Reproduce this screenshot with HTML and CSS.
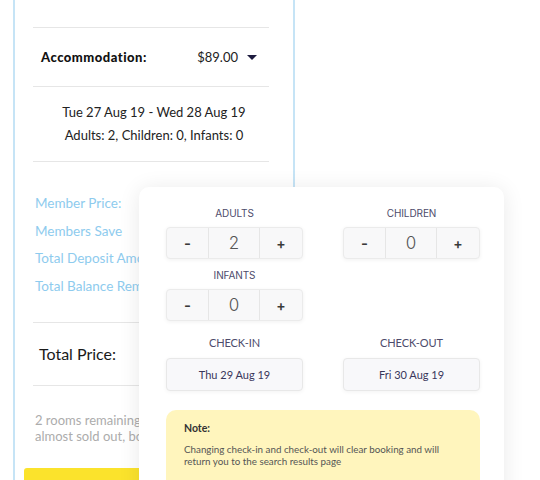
FILE: index.html
```html
<!DOCTYPE html>
<html>
<head>
<meta charset="utf-8">
<link rel="stylesheet" href="styles.css">
</head>
<body>
<div class="panel">
  <div class="divider"></div>
  <div class="accom">
    <span class="accom-label">Accommodation:</span>
    <span class="accom-price">$89.00 <span class="caret"></span></span>
  </div>
  <div class="divider"></div>
  <div class="dates">
    <div>Tue 27 Aug 19 - Wed 28 Aug 19</div>
    <div>Adults: 2, Children: 0, Infants: 0</div>
  </div>
  <div class="divider"></div>
  <div class="members">
    <div>Member Price:</div>
    <div>Members Save</div>
    <div>Total Deposit Amount:</div>
    <div>Total Balance Remaining:</div>
  </div>
  <div class="divider"></div>
  <div class="total">Total Price:</div>
  <div class="divider"></div>
  <div class="remaining">
    <span class="line">2 rooms remaining at this price, this property is</span>
    <span class="line">almost sold out, book now</span>
  </div>
  <div class="book-btn"></div>
</div>

<div class="popup">
  <div class="grid">
    <div class="field">
      <div class="label">ADULTS</div>
      <div class="stepper"><span class="btn">-</span><span class="val">2</span><span class="btn plus">+</span></div>
    </div>
    <div class="field">
      <div class="label">CHILDREN</div>
      <div class="stepper"><span class="btn">-</span><span class="val">0</span><span class="btn plus">+</span></div>
    </div>
    <div class="field">
      <div class="label">INFANTS</div>
      <div class="stepper"><span class="btn">-</span><span class="val">0</span><span class="btn plus">+</span></div>
    </div>
    <div class="field"></div>
    <div class="field date-field">
      <div class="label date-label">CHECK-IN</div>
      <div class="datebox">Thu 29 Aug 19</div>
    </div>
    <div class="field date-field">
      <div class="label date-label">CHECK-OUT</div>
      <div class="datebox">Fri 30 Aug 19</div>
    </div>
  </div>
  <div class="note">
    <div class="note-title">Note:</div>
    <div class="note-text">Changing check-in and check-out will clear booking and will return you to the search results page</div>
  </div>
</div>
</body>
</html>
```

FILE: styles.css
```css
html, body {
  margin: 0;
  padding: 0;
  background: #ffffff;
  overflow: hidden;
  height: 480px;
}
body {
  font-family: "Lato", "Open Sans", sans-serif;
  color: #222;
}
.panel {
  margin-left: 13px;
  width: 278px;
  height: 480px;
  border-left: 2px solid #c6e4f6;
  border-right: 2px solid #c6e4f6;
  padding-top: 27px;
  box-sizing: content-box;
}
.divider {
  height: 1px;
  background: #e6e6e6;
  margin: 0 24px 0 18px;
}
.accom {
  height: 58px;
  display: flex;
  align-items: center;
  justify-content: space-between;
  padding: 0 36px 0 26px;
}
.accom-label {
  font-weight: 900;
  font-size: 13px;
  color: #111;
  letter-spacing: 0.5px;
}
.accom-price {
  font-size: 13px;
  color: #222;
  display: flex;
  align-items: center;
}
.caret {
  display: inline-block;
  width: 0;
  height: 0;
  border-left: 5px solid transparent;
  border-right: 5px solid transparent;
  border-top: 5px solid #1d1b3f;
  margin-left: 9px;
}
.dates {
  height: 74px;
  display: flex;
  flex-direction: column;
  justify-content: center;
  align-items: center;
  font-size: 13px;
  line-height: 23px;
  color: #222;
}
.members {
  padding: 28px 0 21px 20px;
  font-size: 13.5px;
  line-height: 27.7px;
  color: #8ecbee;
  white-space: nowrap;
}
.members div {
  height: 27.7px;
}
.total {
  height: 62px;
  display: flex;
  align-items: center;
  padding-left: 24px;
  font-size: 16px;
  color: #1a1a1a;
}
.remaining {
  padding: 26px 0 0 20px;
  font-size: 13px;
  line-height: 16px;
  color: #acacac;
  height: 56px;
  overflow: hidden;
}
.remaining .line {
  display: block;
  white-space: nowrap;
}
.book-btn {
  margin-left: 9px;
  width: 250px;
  height: 40px;
  background: #fbe32c;
  border-radius: 3px 3px 0 0;
}

.popup {
  position: absolute;
  left: 139px;
  top: 187px;
  width: 365px;
  height: 320px;
  background: #fff;
  border-radius: 10px;
  box-shadow: 0 2px 22px rgba(0, 0, 0, 0.09);
  padding: 19px 24px 0 27px;
  box-sizing: border-box;
}
.grid {
  display: grid;
  grid-template-columns: 137px 137px;
  column-gap: 40px;
  row-gap: 9px;
}
.field {
  display: flex;
  flex-direction: column;
  align-items: center;
}
.label {
  font-family: "Inter", "Roboto", sans-serif;
  font-size: 10px;
  line-height: 14px;
  color: #4d4b6b;
  margin-bottom: 7px;
  letter-spacing: -0.1px;
}
.stepper {
  display: flex;
  width: 137px;
  height: 32px;
  box-sizing: border-box;
  border: 1px solid #ebebeb;
  border-radius: 4px;
  background: #f8f8f9;
  box-shadow: 0 1px 4px rgba(0, 0, 0, 0.06);
  font-family: "Inter", "Roboto", sans-serif;
}
.stepper span {
  display: flex;
  align-items: center;
  justify-content: center;
}
.btn {
  width: 41px;
  font-size: 15px;
  font-weight: 600;
  color: #3a3a3a;
}
.btn.plus {
  width: auto;
  flex: 1;
  font-size: 14px;
}
.val {
  width: 50px;
  border-left: 1px solid #e6e6e6;
  border-right: 1px solid #e6e6e6;
  font-size: 17px;
  font-weight: 300;
  color: #555;
}
.date-field {
  margin-top: 6px;
}
.date-label {
  font-family: "Lato", sans-serif;
  font-size: 11px;
  margin-bottom: 8px;
}
.datebox {
  width: 137px;
  height: 33px;
  box-sizing: border-box;
  border: 1px solid #e8e8e8;
  border-radius: 4px;
  background: #f8f8fa;
  box-shadow: 0 1px 4px rgba(0, 0, 0, 0.05);
  display: flex;
  align-items: center;
  justify-content: center;
  font-size: 11px;
  color: #38365a;
}
.note {
  margin-top: 19px;
  width: 314px;
  height: 90px;
  background: #fff5bd;
  border-radius: 10px;
  padding: 12px 18px;
  box-sizing: border-box;
}
.note-title {
  font-size: 10.5px;
  line-height: 13px;
  font-weight: 700;
  color: #333;
  margin-bottom: 8px;
}
.note-text {
  font-size: 9.8px;
  line-height: 12px;
  color: #555;
  max-width: 268px;
}
```
